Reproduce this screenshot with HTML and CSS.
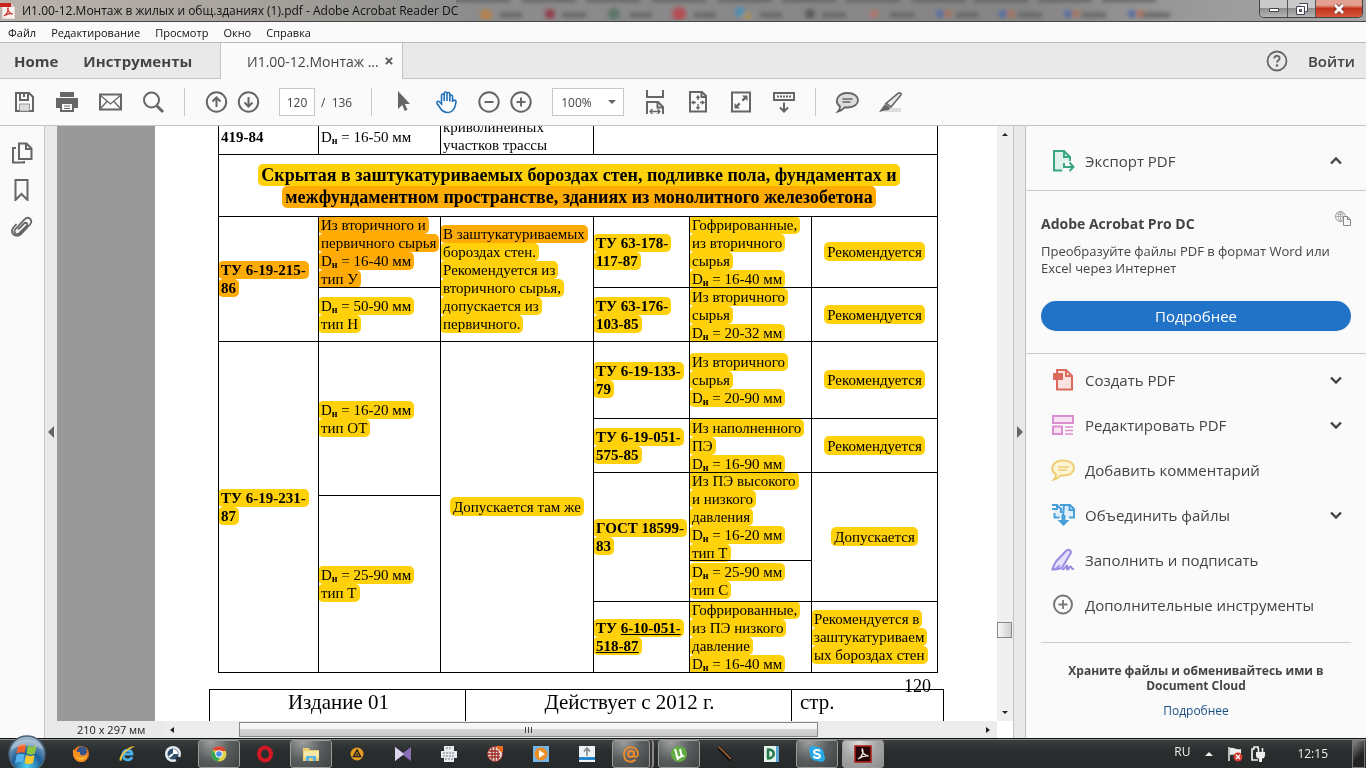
FILE: index.html
```html
<!DOCTYPE html>
<html lang="ru">
<head>
    <meta charset="UTF-8">
    <meta name="viewport" content="width=device-width, initial-scale=1.0">
    <title>И1.00-12.Монтаж в жилых и общ.зданиях (1).pdf - Adobe Acrobat Reader DC</title>
    <link rel="stylesheet" href="styles.css">
</head>
<body>
    <header class="titlebar">
        <svg class="glass" width="900" height="20" viewBox="0 0 900 20" aria-hidden="true">
            <defs>
                <filter id="soft"><feGaussianBlur stdDeviation="2"/></filter>
            </defs>
            <g filter="url(#soft)">
                <path d="M-10 0h64M66 0h54M130 0h54M196 0h54M262 0h54M326 0h54M390 0h54M456 0h54M518 0h54M582 0h54M646 0h54" stroke="#555" stroke-width="3"/>
                <path d="M44 15h22M106 15h24M174 15h22M238 15h22M304 15h22M366 15h24M434 15h24M500 15h22M562 15h24M626 15h24M686 15h28" stroke="#666" stroke-width="5"/>
                <g opacity=".8">
                    <circle cx="30" cy="15" r="6" fill="#c08040"/>
                    <circle cx="94" cy="14" r="5" fill="#982840"/>
                    <circle cx="158" cy="14" r="6" fill="#4f7060"/>
                    <circle cx="223" cy="14" r="7" fill="#c04048"/>
                    <circle cx="284" cy="12" r="5" fill="#4090c0"/>
                    <circle cx="291" cy="16" r="4" fill="#b09850"/>
                    <circle cx="354" cy="14" r="5" fill="#505050"/>
                    <circle cx="418" cy="14" r="4" fill="#c07060"/>
                    <circle cx="484" cy="14" r="4" fill="#4868a8"/>
                    <circle cx="492" cy="14" r="4" fill="#b07050"/>
                    <circle cx="547" cy="14" r="4" fill="#4868a8"/>
                    <circle cx="555" cy="14" r="4" fill="#b07050"/>
                    <circle cx="612" cy="14" r="4" fill="#4868a8"/>
                    <circle cx="620" cy="14" r="4" fill="#b07050"/>
                    <circle cx="676" cy="14" r="4" fill="#4868a8"/>
                    <circle cx="684" cy="14" r="4" fill="#b07050"/>
                </g>
            </g>
        </svg>
        <svg class="app-icon" width="16" height="16" viewBox="0 0 16 16" aria-hidden="true">
            <path d="M2 0h9l4 4v12H2z" fill="#f6f2f0" stroke="#b9aaa6" stroke-width=".6"/>
            <path d="M11 0l4 4h-4z" fill="#cfc4c0"/>
            <path d="M0 0h11v4H0z" fill="#c8241c"/>
            <path d="M4 13c3-2 5-6 4-8-1 1 1 6 5 6-3-1-6 0-9 2z" fill="none" stroke="#d0342c" stroke-width="1.2"/>
        </svg>
        <span class="title">И1.00-12.Монтаж в жилых и общ.зданиях (1).pdf - Adobe Acrobat Reader DC</span>
        <div class="caption">
            <button class="cap-min" aria-label="Свернуть"><svg width="14" height="14" viewBox="0 0 14 14"><path d="M2.500 6.500h9v3h-9z" fill="#fff" stroke="#444"/></svg></button>
            <button class="cap-max" aria-label="Развернуть"><svg width="14" height="14" viewBox="0 0 14 14"><path d="M4.500 1.500h8v8h-2M1.500 4.500h8v8h-8z" fill="#fff" stroke="#445"/><path d="M4.500 7.500h2v2h-2z" fill="#888" stroke="#445"/></svg></button>
            <button class="cap-close" aria-label="Закрыть"><svg width="14" height="14" viewBox="0 0 14 14"><path d="M3 3l8 8M11 3l-8 8" stroke="#733" stroke-width="4.500"/><path d="M3 3l8 8M11 3l-8 8" stroke="#fff" stroke-width="2.800"/></svg></button>
        </div>
    </header>

    <nav class="menubar">
        <a href="#">Файл</a>
        <a href="#">Редактирование</a>
        <a href="#">Просмотр</a>
        <a href="#">Окно</a>
        <a href="#">Справка</a>
    </nav>

    <div class="tabs">
        <div class="tabs-main">
            <a href="#">Home</a>
            <a href="#">Инструменты</a>
        </div>
        <div class="tab">
            <span>И1.00-12.Монтаж ...</span>
            <button aria-label="Закрыть вкладку"><svg width="8" height="8" viewBox="0 0 9 9"><path d="M1 1l7 7M8 1L1 8" stroke="#555" stroke-width="2"/></svg></button>
        </div>
        <div class="tabs-user">
            <button aria-label="Помощь"><svg width="22" height="22" viewBox="0 0 22 22"><circle cx="11" cy="11" r="9.500" fill="none" stroke="#666" stroke-width="1.800"/><path d="M8.300 8.500c0-3.600 5.600-3.400 5.300 0-.2 1.800-2.500 2-2.500 4" fill="none" stroke="#666" stroke-width="2"/><circle cx="11" cy="15.500" r="1.300" fill="#666"/></svg></button>
            <a href="#">Войти</a>
        </div>
    </div>

    <div class="toolbar">
        <button aria-label="Сохранить"><svg viewBox="0 0 24 24"><path d="M4 3h13l4 4v14H4z" class="ln"/><path d="M8 3v7h8V3M12 4v3" class="ln"/><path d="M7.500 14h10v7h-10z" fill="#ddd" stroke="#999"/></svg></button>
        <button aria-label="Печать"><svg viewBox="0 0 24 24"><path d="M5 2h14v5H5zM1 8h22v10h-4v-4H5v4H1z" fill="#666"/><path d="M6 13h12v8H6z" fill="#fafafa" stroke="#666" stroke-width="2"/><path d="M9 16h6M9 18.500h6" stroke="#666" stroke-width="1.200"/></svg></button>
        <button aria-label="Почта"><svg viewBox="0 0 24 24"><path d="M2 4.500h21v15H2z" class="ln"/><path d="M2 5l10.500 9L23 5M2 19l7.500-8M23 19l-7.500-8" class="thin"/></svg></button>
        <button aria-label="Поиск"><svg viewBox="0 0 24 24"><circle cx="10.500" cy="10" r="7.500" class="ln"/><path d="M16 16l6 6" stroke="#666" stroke-width="3"/></svg></button>
        <i class="sep"></i>
        <div class="pair">
            <button aria-label="Предыдущая страница"><svg viewBox="0 0 24 24"><circle cx="12.500" cy="12" r="9.700" class="ln"/><path d="M12.500 17V8M8.500 11.500l4-4 4 4" class="ln"/></svg></button>
            <button aria-label="Следующая страница"><svg viewBox="0 0 24 24"><circle cx="12.500" cy="12" r="9.700" class="ln"/><path d="M12.500 7v9M8.500 12.500l4 4 4-4" class="ln"/></svg></button>
        </div>
        <div class="pager">
            <input type="text" value="120" aria-label="Номер страницы">
            <span>/&nbsp; 136</span>
        </div>
        <i class="sep"></i>
        <button aria-label="Выделение"><svg viewBox="0 0 24 24"><path d="M7 1v18l4.200-4 2.600 6 2.700-1.200-2.700-5.800H19z" fill="#666"/></svg></button>
        <button aria-label="Рука"><svg viewBox="0 0 24 24"><path d="M7.500 14V5.500c0-2 2.700-2 2.700 0V11 3.500c0-2 2.800-2 2.800 0V11 4c0-2 2.800-2 2.800 0v7.500V6.500c0-2 2.700-2 2.700 0V12c.3-2.500 3.800-2.500 3.500 0-.5 4-1.500 10-7.500 10.500-5 .3-7-2-9-5.500L3 13.500c-1-2 1.200-3 2.500-1.500z" fill="#fff" stroke="#2272b9" stroke-width="1.600"/></svg></button>
        <div class="pair">
            <button aria-label="Уменьшить"><svg viewBox="0 0 24 24"><circle cx="12" cy="12" r="9.700" class="ln"/><path d="M7.500 12h9" class="ln"/></svg></button>
            <button aria-label="Увеличить"><svg viewBox="0 0 24 24"><circle cx="12" cy="12" r="9.700" class="ln"/><path d="M7.500 12h9M12 7.500v9" class="ln"/></svg></button>
        </div>
        <div class="zoom">
            <select aria-label="Масштаб"><option>100%</option></select>
        </div>
        <button aria-label="По ширине"><svg viewBox="0 0 24 24"><path d="M4 0v7h16V0M4 24V12h11l5 5v7M14.500 12v5.500H20" class="ln"/><path d="M7 21.500h10M9.500 19L7 21.500 9.500 24M14.500 19l2.500 2.500-2.500 2.500" class="thin"/></svg></button>
        <button aria-label="Страница целиком"><svg viewBox="0 0 24 24"><path d="M4 2h12l4 4v15.500H4zM15.500 2v5H20" class="ln"/><path d="M12 6v4M12 14v5M6 12.500h4M14 12.500h4M10.500 8L12 6l1.500 2M10.500 17l1.500 2 1.500-2M8 11l-2 1.500L8 14M16 11l2 1.500-2 1.500" class="thin"/></svg></button>
        <button aria-label="Во весь экран"><svg viewBox="0 0 24 24"><path d="M3 2.500h18v19H3z" class="ln"/><path d="M13 5.500h5.500V11l-1.900-1.900-2.400 2.400-1.700-1.700 2.400-2.400zM11 18.500H5.500V13l1.900 1.900 2.400-2.400 1.700 1.700-2.400 2.400z" fill="#666"/></svg></button>
        <button aria-label="Прокрутка"><svg viewBox="0 0 24 24"><path d="M2 3h20v7H2z" class="ln"/><path d="M5 6.500h14" stroke="#666" stroke-width="2" stroke-dasharray="2 1"/><path d="M12 12.500V21M8 17.500l4 4 4-4" class="ln"/></svg></button>
        <i class="sep"></i>
        <button aria-label="Комментарий"><svg viewBox="0 0 24 24"><path d="M12.500 3c14 0 14 14.500 0 14.500-1.500 0-2 0-3 0-1.500 2-4 3.500-6.500 4 1.500-1.500 2-3 2-5C-1 12 2 3 12.500 3z" fill="#ddd" stroke="#666" stroke-width="1.800"/><path d="M7.500 9h10M7.500 12h8" class="thin"/></svg></button>
        <button aria-label="Выделение текста"><svg viewBox="0 0 24 24"><path d="M11 18h12v4H6z" fill="#ddd"/><path d="M20 3.500c2-1.500 4 0 2.500 2L13 17l-5-3.500z" fill="#e8e8e8" stroke="#666" stroke-width="1.600"/><path d="M7 14l5.500 4-2 2-3 .5L1 22z" fill="#666"/></svg></button>
    </div>

    <main class="workspace">
        <aside class="rail">
            <button aria-label="Миниатюры"><svg width="22" height="22" viewBox="0 0 22 22"><path d="M8 1.500h7.500l5 5V17H8zM15 2v5h5.500M5 6H2v14.500h11V19" class="ln"/></svg></button>
            <button aria-label="Закладки"><svg width="22" height="22" viewBox="0 0 22 22"><path d="M4.500 1h12v20l-6-6-6 6z" class="ln"/></svg></button>
            <button aria-label="Вложения"><svg width="22" height="22" viewBox="0 0 22 22"><path d="M7 13.500l6-6c2-2 4.500.5 2.500 2.500l-7 7c-3.500 3-6.500-1-4-4l9-9.500c4-4 9 .5 5.500 5l-9 9.500C6.500 21.500 1 19.500 1 15c0-1.500.5-2.500 1.500-3.500l3-3.500" fill="none" stroke="#666" stroke-width="1.800"/></svg></button>
        </aside>
        <button class="collapse" aria-label="Скрыть панель навигации"><svg width="6" height="12" viewBox="0 0 6 12"><path d="M6 0v12L0 6z" fill="#666"/></svg></button>

        <section class="document">
            <div class="viewer">
                <article class="page">
                    <table class="pipes">
                        <colgroup>
                            <col class="c-code"><col class="c-size"><col class="c-place"><col class="c-std"><col class="c-size"><col class="c-note">
                        </colgroup>
                        <tbody>
                            <tr class="r-first">
                                <td class="up"><b>419-84</b></td>
                                <td class="up">D<sub>н</sub> = 16-50 мм</td>
                                <td>криволинейных<br>участков трассы</td>
                                <td colspan="3"></td>
                            </tr>
                            <tr class="r-head">
                                <th colspan="6"><mark>Скрытая в заштукатуриваемых бороздах стен, подливке пола, фундаментах и</mark><br><mark class="hot">межфундаментном пространстве, зданиях из монолитного железобетона</mark></th>
                            </tr>
                            <tr class="r-four">
                                <td rowspan="2"><p><mark class="hot"><b>ТУ 6-19-215-<br>86</b></mark></p></td>
                                <td><p><mark class="hot">Из вторичного и<br>первичного сырья<br>D<sub>н</sub> = 16-40 мм<br>тип У</mark></p></td>
                                <td rowspan="2"><p><mark class="hot">В заштукатуриваемых</mark><br><mark>бороздах стен.<br>Рекомендуется из<br>вторичного сырья,<br>допускается из<br>первичного.</mark></p></td>
                                <td><p><mark><b>ТУ 63-178-<br>117-87</b></mark></p></td>
                                <td><p><mark>Гофрированные,<br>из вторичного<br>сырья<br>D<sub>н</sub> = 16-40 мм</mark></p></td>
                                <td class="mid"><mark>Рекомендуется</mark></td>
                            </tr>
                            <tr class="r-three">
                                <td><p><mark>D<sub>н</sub> = 50-90 мм<br>тип Н</mark></p></td>
                                <td><p><mark><b>ТУ 63-176-<br>103-85</b></mark></p></td>
                                <td><p><mark>Из вторичного<br>сырья<br>D<sub>н</sub> = 20-32 мм</mark></p></td>
                                <td class="mid"><mark>Рекомендуется</mark></td>
                            </tr>
                            <tr class="r-tall">
                                <td rowspan="6"><p><mark><b>ТУ 6-19-231-<br>87</b></mark></p></td>
                                <td rowspan="3"><p><mark>D<sub>н</sub> = 16-20 мм<br>тип ОТ</mark></p></td>
                                <td rowspan="6" class="mid"><mark>Допускается там же</mark></td>
                                <td><p><mark><b>ТУ 6-19-133-<br>79</b></mark></p></td>
                                <td><p><mark>Из вторичного<br>сырья<br>D<sub>н</sub> = 20-90 мм</mark></p></td>
                                <td class="mid"><mark>Рекомендуется</mark></td>
                            </tr>
                            <tr class="r-three">
                                <td><p><mark><b>ТУ 6-19-051-<br>575-85</b></mark></p></td>
                                <td><p><mark>Из наполненного<br>ПЭ<br>D<sub>н</sub> = 16-90 мм</mark></p></td>
                                <td class="mid"><mark>Рекомендуется</mark></td>
                            </tr>
                            <tr class="r-thin">
                                <td rowspan="3"><p><mark><b>ГОСТ 18599-<br>83</b></mark></p></td>
                                <td rowspan="2"><p><mark>Из ПЭ высокого<br>и низкого<br>давления<br>D<sub>н</sub> = 16-20 мм<br>тип Т</mark></p></td>
                                <td rowspan="3" class="mid"><mark>Допускается</mark></td>
                            </tr>
                            <tr class="r-mid">
                                <td rowspan="3"><p><mark>D<sub>н</sub> = 25-90 мм<br>тип Т</mark></p></td>
                            </tr>
                            <tr class="r-two">
                                <td><p><mark>D<sub>н</sub> = 25-90 мм<br>тип С</mark></p></td>
                            </tr>
                            <tr class="r-four">
                                <td><p><mark><b>ТУ <u>6-10-051-<br>518-87</u></b></mark></p></td>
                                <td><p><mark>Гофрированные,<br>из ПЭ низкого<br>давление<br>D<sub>н</sub> = 16-40 мм</mark></p></td>
                                <td><p><mark>Рекомендуется в<br>заштукатуриваем<br>ых бороздах стен</mark></p></td>
                            </tr>
                        </tbody>
                    </table>
                    <div class="page-number">120</div>
                    <table class="stamp">
                        <colgroup><col class="s-issue"><col class="s-date"><col class="s-page"></colgroup>
                        <tbody>
                            <tr><td>Издание 01</td><td>Действует с 2012 г.</td><td class="s-left">стр.</td></tr>
                        </tbody>
                    </table>
                </article>
                <div class="vscroll">
                    <button aria-label="Вверх"><svg width="6" height="3" viewBox="0 0 6 3"><path d="M0 3l3-3 3 3z" fill="#222"/></svg></button>
                    <div class="vthumb"></div>
                    <button aria-label="Вниз"><svg width="6" height="3" viewBox="0 0 6 3"><path d="M0 0h6L3 3z" fill="#222"/></svg></button>
                </div>
            </div>
            <div class="hscroll">
                <span class="page-size">210 x 297 мм</span>
                <button aria-label="Влево"><svg width="4" height="6" viewBox="0 0 4 6"><path d="M4 0v6L0 3z" fill="#222"/></svg></button>
                <div class="hthumb"><i></i><i></i><i></i></div>
                <button aria-label="Вправо"><svg width="4" height="6" viewBox="0 0 4 6"><path d="M0 0l4 3-4 3z" fill="#222"/></svg></button>
                <div class="corner"></div>
            </div>
        </section>

        <button class="collapse right" aria-label="Скрыть панель инструментов"><svg width="6" height="12" viewBox="0 0 6 12"><path d="M0 0v12l6-6z" fill="#666"/></svg></button>
        <aside class="tools">
            <a class="tool export" href="#">
                <svg viewBox="0 0 24 24"><path d="M3 2h10l6 6v4L13 14v7.500H3z" fill="#dff1ea"/><path d="M11 21.500H3V2h10l6 6v4M13 2.500V8h5.500" fill="none" stroke="#3ba583" stroke-width="2"/><path d="M13 14v4h8M18.500 13.500L22.500 18l-4 4" fill="none" stroke="#3ba583" stroke-width="2"/></svg>
                <span>Экспорт PDF</span>
                <svg class="chev" viewBox="0 0 12 8"><path d="M1 6.500l5-5 5 5"/></svg>
            </a>
            <div class="promo">
                <div class="promo-title">
                    <h2>Adobe Acrobat Pro DC</h2>
                    <svg width="16" height="15" viewBox="0 0 16 15"><circle cx="5.500" cy="5.500" r="5" fill="none" stroke="#999"/><path d="M.5 5.500h10M5.500.5v10M2 2.500c2 1.500 5 1.500 7 0M5.500.5c-3 3-3 7 0 10M5.500.5c3 3 3 7 0 10" fill="none" stroke="#999" stroke-width=".7"/><path d="M8.500 5.500h4l3 3v6h-7zM12.500 5.500v3h3" fill="#fafafa" stroke="#888"/></svg>
                </div>
                <p>Преобразуйте файлы PDF в формат Word или Excel через Интернет</p>
                <button>Подробнее</button>
            </div>
            <nav class="tool-list">
                <a class="tool" href="#">
                    <svg viewBox="0 0 24 24"><path d="M6 2h9l6 6v13.500H6zM15 2v6h6" fill="#fae3df" stroke="#db6a5e" stroke-width="2"/><path d="M2 5h10v7H2z" fill="#db6a5e"/></svg>
                    <span>Создать PDF</span>
                    <svg class="chev" viewBox="0 0 12 8"><path d="M1 1.500l5 5 5-5"/></svg>
                </a>
                <a class="tool" href="#">
                    <svg viewBox="0 0 24 24"><path d="M2 3h20v7H2zM2 13.500h9V21H2z" fill="#f8e2f3" stroke="#dc8fcf" stroke-width="2"/><path d="M14 14h8M14 17.500h8M14 21h8" stroke="#dc8fcf" stroke-width="1.500"/></svg>
                    <span>Редактировать PDF</span>
                    <svg class="chev" viewBox="0 0 12 8"><path d="M1 1.500l5 5 5-5"/></svg>
                </a>
                <a class="tool" href="#">
                    <svg viewBox="0 0 24 24"><path d="M12.500 2.500c14 0 14 15 0 15-1.500 0-2 0-3 0-1.500 2-4 3.500-6.500 4 1.500-1.500 2-3 2-5C-2 12 1 2.500 12.500 2.500z" fill="#fdf3d5" stroke="#efcd72" stroke-width="2"/><path d="M7 9h11M7 12h9" stroke="#efcd72" stroke-width="1.500"/></svg>
                    <span>Добавить комментарий</span>
                </a>
                <a class="tool" href="#">
                    <svg viewBox="0 0 24 24"><path d="M3 6h6l3-3v12H3zM12 2h7l4 4v9H12z" fill="#dff0fb"/><path d="M8.500 14.500H3.500V10M1 2h5l4 4v4M6 2v4H1M9 2h4l-1 11M13 2h6l4 4v8.500h-5M18.500 2v5H23" fill="none" stroke="#4a9fdb" stroke-width="2"/><path d="M10.500 12h4v5h4L12.500 23l-6-6h4z" fill="#4a9fdb"/></svg>
                    <span>Объединить файлы</span>
                    <svg class="chev" viewBox="0 0 12 8"><path d="M1 1.500l5 5 5-5"/></svg>
                </a>
                <a class="tool" href="#">
                    <svg viewBox="0 0 24 24"><path d="M15 3c2-2.500 6-.5 4.500 2.500L11.500 19c-1.500 2-5 2.500-10 2.500 1-4 2-6 3.500-8z" fill="#e5e1fb" stroke="#968be2" stroke-width="2"/><path d="M4 21.500l5-4M11 21.500c3 0 4-4 5-4s-1 4 .5 4 1.500-3 3-3 0 3 3.500 2.500" fill="none" stroke="#968be2" stroke-width="2"/></svg>
                    <span>Заполнить и подписать</span>
                </a>
                <a class="tool" href="#">
                    <svg viewBox="0 0 24 24"><circle cx="12" cy="11.500" r="9" fill="none" stroke="#777" stroke-width="2"/><path d="M7.500 11.500h9M12 7v9" stroke="#777" stroke-width="1.800"/></svg>
                    <span>Дополнительные инструменты</span>
                </a>
            </nav>
            <div class="cloud">
                <strong>Храните файлы и обменивайтесь ими в Document Cloud</strong>
                <a href="#">Подробнее</a>
            </div>
        </aside>
    </main>

    <footer class="taskbar">
        <button class="start" aria-label="Пуск">
            <svg width="38" height="38" viewBox="0 0 38 38">
                <defs>
                    <radialGradient id="orb" cx=".5" cy=".85" r=".8"><stop offset="0" stop-color="#4ed0f0"/><stop offset=".5" stop-color="#1c5f9a"/><stop offset="1" stop-color="#9fb6c8"/></radialGradient>
                </defs>
                <circle cx="19" cy="19" r="18" fill="url(#orb)" stroke="#4d6478" stroke-width="1.500"/>
                <path d="M10 11c3-2 5-2 8-1l-1.500 8c-3-1-5-1-8 1z" fill="#f2622b"/>
                <path d="M20 10.500c3 1.500 5 1.500 8.500 0L27 18.500c-3 1.500-5.500 1.500-8.500 0z" fill="#8cc63e"/>
                <path d="M8.500 20c3-1.500 5-1.500 8-.5L15 27.500c-3-1-5-1-8 1z" fill="#55b4ee"/>
                <path d="M18 20c3 1.500 5.500 1.500 8.500 0L25 28c-3 1.500-5.500 1.500-8.500 0z" fill="#fcc92d"/>
                <path d="M3 15C5 1 33 1 35 15 26 9 12 9 3 15z" fill="#fff" opacity=".3"/>
            </svg>
        </button>
        <div class="apps">
            <button aria-label="Firefox"><svg viewBox="0 0 18 18"><circle cx="9" cy="9" r="8" fill="#e8731c"/><circle cx="10" cy="6.500" r="5" fill="#35558f"/><path d="M1 4c2 3 4 3 7 3-1 4 4 5 7 1 2 4-1 9-6 9S0 12 1 4z" fill="#f59120"/><path d="M4 11c3 3 7 3 10 0-1 4-8 5-10 0z" fill="#fdd04a"/></svg></button>
            <button aria-label="Internet Explorer"><svg viewBox="0 0 18 18"><path d="M14 12c-2 5-10 3-9-3 1-5 9-5 9 0H6" fill="none" stroke="#49b0ea" stroke-width="2.800"/><path d="M2 16C-1 12 11-1 17 2c-4 0-15 8-13 13z" fill="#f4c13a"/></svg></button>
            <button aria-label="QuickTime"><svg viewBox="0 0 18 18"><circle cx="9" cy="9" r="8" fill="#e2ebf0"/><circle cx="9" cy="9" r="5.500" fill="#33506c"/><path d="M9 4v5h5a5 5 0 0 0-5-5z" fill="#fff"/><path d="M9 9l-4 3" stroke="#fff" stroke-width="2"/><circle cx="14" cy="14" r="2.500" fill="#26303a"/></svg></button>
            <button class="open" aria-label="Chrome"><svg viewBox="0 0 18 18"><circle cx="9" cy="9" r="7.500" fill="#ddd04a"/><path d="M2.500 5a7.500 7.500 0 0 1 13.500 1H9z" fill="#dd4435"/><path d="M2.500 5a7.500 7.500 0 0 0 5 11.500L11 11 6 10z" fill="#35a552"/><circle cx="9" cy="9" r="3.700" fill="#fff"/><circle cx="9" cy="9" r="2.800" fill="#4a8de8"/></svg></button>
            <button aria-label="Opera"><svg viewBox="0 0 18 18"><ellipse cx="9" cy="9" rx="6" ry="6.500" fill="none" stroke="#d21825" stroke-width="4"/></svg></button>
            <button class="open" aria-label="Проводник"><svg viewBox="0 0 18 18"><path d="M1 3h6l1 2h9v11H1z" fill="#e9ce72"/><path d="M2 6h15v7H2z" fill="#f7e8a6"/><path d="M4 16v-5h10v5h-3v-3H7v3z" fill="#56b3e3"/></svg></button>
            <button aria-label="AIMP"><svg viewBox="0 0 18 18"><circle cx="9" cy="9" r="6.500" fill="#e59d22"/><path d="M9 5l3.500 6.500h-7z" fill="none" stroke="#222" stroke-width="1.500"/><circle cx="9" cy="9.500" r="1" fill="#222"/></svg></button>
            <button aria-label="KMPlayer"><svg viewBox="0 0 18 18"><path d="M1 2l8 6 8-6v14l-8-6-8 6z" fill="#8a6cb8"/><path d="M1 2l9 7-9 7z" fill="#dcd4ec"/></svg></button>
            <button aria-label="Принтер"><svg viewBox="0 0 18 18"><path d="M4 1h10v5H4zM1 6h16v7H1zM4 12h10v5H4z" fill="#e8ecef"/><path d="M3 8h12M3 11h12M5 14h8M6 3h6" stroke="#778" stroke-width="1.200" stroke-dasharray="2 1"/></svg></button>
            <button aria-label="Словарь"><svg viewBox="0 0 18 18"><circle cx="9" cy="9" r="7.500" fill="#e9ded8"/><path d="M3 6h9M2 9h12M3 12h11M6 3v12M9 2v14M12 6v9" stroke="#a02c28" stroke-width="1.300"/><circle cx="9" cy="9" r="7.500" fill="none" stroke="#a02c28"/><path d="M10 1h7v6c-3 0-5-2-7-6z" fill="#ed6a23"/></svg></button>
            <button aria-label="Media Player"><svg viewBox="0 0 18 18"><path d="M1 1h16v16H1z" fill="#76b4e6"/><circle cx="9" cy="9" r="6.500" fill="#ef8f22"/><path d="M7 5l6 4-6 4z" fill="#fff"/></svg></button>
            <button aria-label="Загрузчик"><svg viewBox="0 0 18 18"><path d="M1 1h16v16H1z" fill="#edf1f4"/><path d="M1 12h16v3H1z" fill="#2686cc"/><path d="M9 11V4M6 6.500L9 3l3 3.500" fill="none" stroke="#888" stroke-width="1.600"/></svg></button>
            <button class="open stack" aria-label="Агент"><svg viewBox="0 0 18 18"><circle cx="9" cy="9" r="3" fill="none" stroke="#ef8a2c" stroke-width="2"/><path d="M12 6v4.500c.5 2.500 4 1.500 4-1.500 0-9-14-9-14 0s8 9 11.500 5.500" fill="none" stroke="#ef8a2c" stroke-width="1.800"/></svg></button>
            <button class="open" aria-label="uTorrent"><svg viewBox="0 0 18 18"><circle cx="9" cy="9" r="8" fill="#62ac43"/><path d="M5 4l2 7c.5 2 4 2 4.500-.5L10 4M11.500 10c.5 1.500 2 1 2.500.5M6.500 10L8 15" fill="none" stroke="#fff" stroke-width="2"/></svg></button>
            <button aria-label="Игра"><svg viewBox="0 0 18 18"><path d="M3 3l12 12" stroke="#111" stroke-width="4"/><path d="M3 2l12 12" stroke="#b06638" stroke-width="1.500"/></svg></button>
            <button aria-label="Dictionary"><svg viewBox="0 0 18 18"><path d="M2 1h14v16H2z" fill="#e4f0ea"/><path d="M14 1h3v16h-3z" fill="#5ba6d2"/><path d="M5 4.500c9-1 9 9 0 9M6 5v8" fill="none" stroke="#237b4a" stroke-width="2.600"/></svg></button>
            <button class="open" aria-label="Skype"><svg viewBox="0 0 18 18"><circle cx="9" cy="9" r="7" fill="#29a9e5"/><circle cx="5" cy="5" r="4" fill="#29a9e5"/><circle cx="13" cy="13" r="4" fill="#29a9e5"/><path d="M12 6.500C11 4 6 4.500 6 7s6 1.500 6 4-5 3-6.500 0" fill="none" stroke="#fff" stroke-width="1.900"/></svg></button>
            <button class="open active" aria-label="Acrobat Reader"><svg viewBox="0 0 18 18"><path d="M1 1h16v16H1z" fill="#260605" stroke="#b01e18" stroke-width="1.500"/><path d="M4 14c4-2 6-7 4.500-10C7 6 10 11 14.500 11 11 10.500 7 12 4 14z" fill="none" stroke="#e4dcdc" stroke-width="1.300"/></svg></button>
        </div>
        <div class="tray">
            <span class="lang">RU</span>
            <button class="more" aria-label="Показать скрытые значки"><svg width="8" height="4" viewBox="0 0 8 4"><path d="M0 4l4-4 4 4z" fill="#eee"/></svg></button>
            <button aria-label="Центр поддержки"><svg width="16" height="16" viewBox="0 0 16 16"><path d="M2 1v14" stroke="#eee" stroke-width="1.500"/><path d="M3 2c4-1 5 2 11 1v6c-5 1-7-1-11 0z" fill="#eee"/><circle cx="11" cy="11" r="4.500" fill="#d23a32"/><path d="M9 9l4 4M13 9l-4 4" stroke="#fff" stroke-width="1.400"/></svg></button>
            <button aria-label="Питание"><svg width="14" height="16" viewBox="0 0 14 16"><path d="M7 14H1V3h2V1h4v2" fill="none" stroke="#eee" stroke-width="1.700"/><path d="M5 6h9v3c0 3-2 3.500-3 3.500V16H8v-3.500c-2 0-3-1-3-3.500z" fill="#eee"/><path d="M7.500 2v4M11.500 2v4" stroke="#eee" stroke-width="1.600"/></svg></button>
            <time>12:15</time>
            <button class="desktop" aria-label="Показать рабочий стол"></button>
        </div>
    </footer>
</body>
</html>
```
FILE: styles.css
```css
* {
    box-sizing: border-box;
}

body {
    margin: 0;
    height: 100vh;
    display: flex;
    flex-direction: column;
    overflow: hidden;
    font-family: "Open Sans", "Noto Sans", sans-serif;
    font-size: 12px;
    color: #444;
    background: #fafafa;
}

a {
    color: inherit;
    text-decoration: none;
}

button {
    display: flex;
    align-items: center;
    justify-content: center;
    padding: 0;
    border: none;
    background: none;
    font-family: inherit;
    color: inherit;
}

.ln {
    fill: none;
    stroke: #666;
    stroke-width: 2;
}

.thin {
    fill: none;
    stroke: #666;
    stroke-width: 1.3;
}

/* title bar */
.titlebar {
    position: relative;
    flex: 0 0 22px;
    display: flex;
    align-items: center;
    overflow: hidden;
    background: linear-gradient(90deg, #b9b3ac 0, #aaa69f 220px, #8c8c8c 470px, #858585 75%, #9b9b9b 88%, #a5a5a5 100%);
    border-bottom: 1px solid #444;
}

.glass {
    position: absolute;
    left: 456px;
    top: 0;
}

.title {
    margin-left: 6px;
    color: #111;
    white-space: nowrap;
}

.caption {
    position: relative;
    align-self: flex-start;
    display: flex;
    height: 18px;
    margin-left: auto;
    margin-right: 3px;
    border: 1px solid #444;
    border-top: none;
    border-radius: 0 0 5px 5px;
    overflow: hidden;
}

.cap-min,
.cap-max {
    width: 28px;
    background: linear-gradient(#c9c9c9 45%, #8e8e8e 50%, #b5b5b5);
    border-right: 1px solid #555;
}

.cap-close {
    width: 46px;
    background: linear-gradient(#e3a091 30%, #c3321c 50%, #d5583d);
}

/* menu */
.menubar {
    flex: 0 0 21px;
    display: flex;
    align-items: center;
    gap: 15px;
    padding-left: 8px;
    font-size: 11px;
    color: #111;
    border-bottom: 1px solid #bbb;
}

/* tabs */
.tabs {
    flex: 0 0 36px;
    display: flex;
    background: #e9e9e9;
    font-size: 15px;
}

.tabs-main,
.tabs-user {
    display: flex;
    align-items: center;
    font-weight: 600;
    border-bottom: 1px solid #c4c4c4;
}

.tabs-main {
    min-width: 220px;
    padding-left: 14px;
    gap: 25px;
    font-weight: 700;
}

.tab {
    display: flex;
    align-items: center;
    gap: 6px;
    padding: 0 9px 0 26px;
    background: #fafafa;
    border-left: 1px solid #c4c4c4;
    border-right: 1px solid #c4c4c4;
    font-size: 14px;
}

.tabs-user {
    flex: 1;
    justify-content: flex-end;
    gap: 20px;
    padding-right: 11px;
}

/* toolbar */
.toolbar {
    flex: 0 0 47px;
    display: flex;
    align-items: center;
    gap: 19px;
    padding-left: 12px;
    border-bottom: 1px solid #c4c4c4;
}

.toolbar button {
    flex: 0 0 24px;
    height: 24px;
}

.toolbar svg {
    width: 24px;
    height: 24px;
}

.sep {
    flex: 0 0 1px;
    height: 28px;
    background: #c8c8c8;
}

.pair {
    display: flex;
    gap: 8px;
}

.pager {
    display: flex;
    align-items: center;
    gap: 6px;
    min-width: 72px;
}

.pager input {
    width: 36px;
    height: 28px;
    padding: 0;
    text-align: center;
    font: inherit;
    color: inherit;
    background: #fff;
    border: 1px solid #c8c8c8;
}

.zoom {
    position: relative;
}

.zoom select {
    appearance: none;
    display: block;
    width: 72px;
    height: 28px;
    padding: 0 8px;
    font: inherit;
    color: inherit;
    background: #fff;
    border: 1px solid #c8c8c8;
    border-radius: 0;
}

.zoom::after {
    content: "";
    position: absolute;
    right: 8px;
    top: 12px;
    border: 4px solid transparent;
    border-top-color: #666;
    border-bottom: none;
}

/* workspace */
.workspace {
    flex: 1;
    min-height: 0;
    display: flex;
}

.rail {
    flex: 0 0 45px;
    display: flex;
    flex-direction: column;
    align-items: center;
    gap: 15px;
    padding-top: 16px;
    border-right: 1px solid #c4c4c4;
}

.collapse {
    flex: 0 0 12px;
    background: #e9e9e9;
}

.collapse.right {
    flex-basis: 13px;
    border-left: 1px solid #c4c4c4;
    border-right: 1px solid #c4c4c4;
}

.document {
    flex: 1;
    min-width: 0;
    display: flex;
    flex-direction: column;
}

.viewer {
    flex: 1;
    min-height: 0;
    display: flex;
    background: #999;
}

.page {
    flex: 1;
    margin-left: 98px;
    padding: 0 59px 0 63px;
    overflow: hidden;
    background: #fff;
    color: #000;
    font-family: "Liberation Serif", "Times New Roman", serif;
    font-size: 15px;
    line-height: 18px;
}

.page table {
    table-layout: fixed;
    border-collapse: collapse;
}

.page td,
.page th {
    padding: 0 0 0 2px;
    border: 1px solid #000;
    white-space: nowrap;
}

.page p {
    margin: -2px 0;
}

.page sub {
    font-size: 10px;
    font-weight: bold;
    line-height: 0;
    vertical-align: -2px;
}

.pipes {
    width: 100%;
    margin-top: -14px;
}

.c-code { width: 100px; }
.c-size { width: 122px; }
.c-place { width: 153px; }
.c-std { width: 96px; }
.c-note { width: 126px; }

.r-first { height: 42px; }
.r-head { height: 62px; }
.r-four { height: 71px; }
.r-three { height: 54px; }
.r-tall { height: 77px; }
.r-thin { height: 23px; }
.r-mid { height: 65px; }
.r-two { height: 41px; }

.r-first td {
    vertical-align: bottom;
}

.r-first .up {
    padding-bottom: 8px;
}

.r-head th {
    font-size: 18px;
    line-height: 22px;
}

.page .mid {
    padding: 0;
    text-align: center;
}

mark {
    padding: 1px 3px;
    margin: 0 -3px;
    color: inherit;
    background: #ffd10a;
    border-radius: 5px;
    -webkit-box-decoration-break: clone;
    box-decoration-break: clone;
    mix-blend-mode: multiply;
}

mark.hot {
    background: #ffab05;
}

.mid mark {
    padding: 2px 3px 1px;
}

.page-number {
    margin: 4px 7px -6px 0;
    text-align: right;
    font-size: 18px;
}

.stamp {
    width: calc(100% + 15px);
    margin-left: -9px;
    font-size: 21px;
    line-height: 24px;
    text-align: center;
}

.stamp td {
    height: 48px;
    vertical-align: top;
}

.s-issue { width: 256px; }
.s-date { width: 326px; }
.s-page { width: 152px; }

.stamp .s-left {
    padding-left: 8px;
    text-align: left;
}

/* scrollbars */
.vscroll {
    flex: 0 0 16px;
    display: flex;
    flex-direction: column;
    background: #efefef;
}

.vscroll button {
    height: 17px;
}

.vthumb {
    height: 16px;
    margin: auto 1px 66px 0;
    border: 1px solid #888;
    background: linear-gradient(90deg, #f8f8f8, #d0d0d0);
}

.hscroll {
    flex: 0 0 17px;
    display: flex;
    background: #ececec;
}

.hscroll button {
    flex: 0 0 18px;
}

.page-size {
    flex: 0 0 106px;
    padding-left: 20px;
    font-size: 11px;
    line-height: 17px;
    color: #222;
    background: #e9e9e9;
}

.hthumb {
    flex: 1;
    display: flex;
    align-items: center;
    justify-content: center;
    gap: 2px;
    height: 15px;
    margin: 1px 161px 0 58px;
    border: 1px solid #888;
    background: linear-gradient(#f6f6f6 45%, #d6d6d6 50%, #c8c8c8);
}

.hthumb i {
    width: 1px;
    height: 6px;
    background: #444;
}

.corner {
    flex: 0 0 16px;
    background: #fff;
}

/* tools panel */
.tools {
    flex: 0 0 340px;
    overflow: hidden;
}

.tool {
    display: flex;
    align-items: center;
    height: 45px;
    padding: 0 24px 0 25px;
    font-size: 15px;
}

.tool svg {
    width: 24px;
    height: 24px;
    margin-right: 10px;
}

.tool .chev {
    width: 12px;
    height: 8px;
    margin: 0 0 0 auto;
    fill: none;
    stroke: #444;
    stroke-width: 2.4;
}

.export {
    height: 65px;
    padding-top: 6px;
    border-bottom: 1px solid #ccc;
}

.promo {
    padding: 20px 15px 22px;
    border-bottom: 1px solid #ccc;
    font-size: 13px;
}

.promo-title {
    display: flex;
    justify-content: space-between;
}

.promo h2 {
    margin: 4px 0 0;
    font-size: 14px;
    line-height: 18px;
}

.promo p {
    margin: 10px 0 24px;
    line-height: 17px;
}

.promo button {
    width: 100%;
    height: 30px;
    border-radius: 15px;
    background: #2073c7;
    color: #fff;
    font-size: 15px;
}

.tool-list {
    padding-top: 3px;
}

.cloud {
    margin: 15px 15px 0;
    padding-top: 20px;
    border-top: 1px solid #ccc;
    text-align: center;
    line-height: 15px;
}

.cloud strong,
.cloud a {
    display: block;
}

.cloud a {
    margin-top: 10px;
    color: #1c4f86;
}

/* taskbar */
.taskbar {
    flex: 0 0 30px;
    display: flex;
    align-items: center;
    background: linear-gradient(#3c4040, #2a2e2e 40%, #252929);
    border-top: 1px solid #111;
    box-shadow: inset 0 1px #8b8f8f;
}

/* the orb sticks out above the bar */
.start {
    position: relative;
    flex: 0 0 38px;
    height: 38px;
    margin: -5px 14px -5px 8px;
}

.apps {
    display: flex;
    gap: 4px;
}

.apps button {
    width: 42px;
    height: 28px;
}

.apps svg {
    width: 18px;
    height: 18px;
}

.apps .open {
    border: 1px solid #9a9c9c;
    border-radius: 3px;
    background: radial-gradient(circle at 30% 0, #a0a2a2, #5a5e5e 50%, #3e4242);
}

.apps .active {
    background: radial-gradient(circle at 40% 0, #e0e0e0, #a8a8a8 50%, #8c8c8c);
}

.apps .stack {
    width: 38px;
    margin-right: 4px;
    box-shadow: 2px 0 #333, 4px 0 #888;
}

.tray {
    flex: 1;
    display: flex;
    align-items: center;
    justify-content: flex-end;
    gap: 8px;
    color: #eee;
}

.tray .lang {
    margin-bottom: 5px;
}

.tray .more {
    margin: 0 6px 0 7px;
}

.tray time {
    margin: 0 16px 0 24px;
}

.desktop {
    width: 13px;
    height: 28px;
    margin-right: 1px;
    border: 1px solid #777;
    background: linear-gradient(135deg, #888, #222 60%);
}
```
